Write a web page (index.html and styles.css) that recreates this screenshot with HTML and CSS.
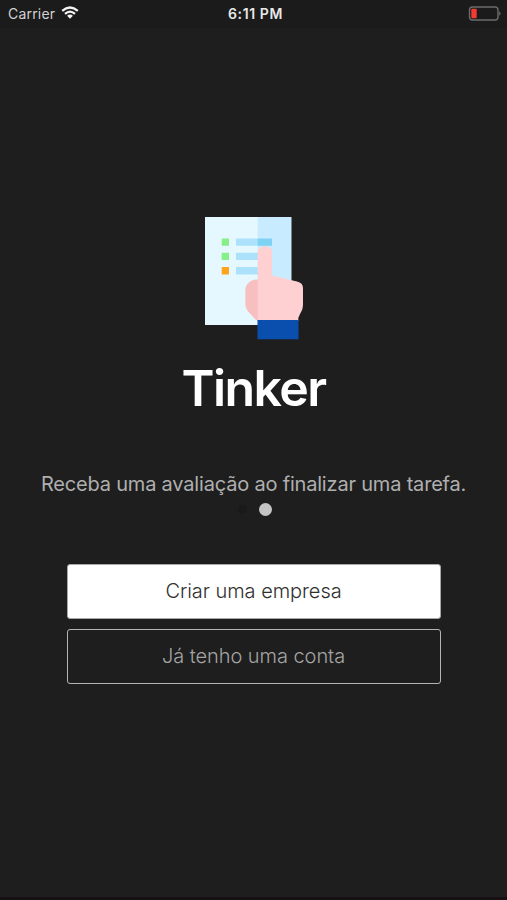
FILE: index.html
```html
<!DOCTYPE html>
<html lang="pt-BR">
<head>
<meta charset="utf-8">
<meta name="viewport" content="width=device-width, initial-scale=1">
<title>Tinker</title>
<link rel="stylesheet" href="styles.css">
</head>
<body>
<main class="screen">
  <header class="status">
    <div class="carrier"><span>Carrier</span>
      <svg class="wifi" width="18" height="14" viewBox="0 0 18 14" aria-hidden="true">
        <path d="M1.2 4.9Q9-1.9 16.8 4.9M4 7.9Q9 3.4 14 7.9" fill="none" stroke="#f4f4f4" stroke-width="2.3"/>
        <path d="M6.1 9.7Q9 7.4 11.9 9.7L9 12.8Z" fill="#f4f4f4"/>
      </svg>
    </div>
    <span class="time">6:11 PM</span>
    <svg class="battery" width="33" height="15" viewBox="0 0 33 15" aria-hidden="true">
      <rect x="1.5" y="1" width="28.5" height="13" rx="3" fill="none" stroke="#6c6c6c" stroke-width="1.4"/>
      <rect x="3.3" y="2.8" width="5.4" height="9.4" rx="1" fill="#f53a32"/>
      <path d="M31.2 5.2Q34 7.5 31.2 9.8Z" fill="#6c6c6c"/>
    </svg>
  </header>
  <section class="intro">
    <svg class="logo" width="100" height="124" viewBox="204 216 100 124" aria-hidden="true">
      <path d="M205 217h53v108h-53z" fill="#e6f8ff"/>
      <path d="M257.7 217h33.8v108h-33.8z" fill="#c9ebff"/>
      <path d="M221.7 238.5h7.3v7.3h-7.3zM221.7 252.8h7.3v7.3h-7.3z" fill="#86ef88"/>
      <path d="M221.7 267h7.3v7.5h-7.3z" fill="#ffa51d"/>
      <path d="M236 238.5h22v7.3h-22zM236 252.8h22v7.3h-22zM236 267h22v7.5h-22z" fill="#abe1fa"/>
      <path d="M257.7 238.5H272v7.3h-14.3z" fill="#7ed3f5"/>
      <path d="M258 279.5C250 279 245.3 284.5 245.3 291V303C245.3 308 247 310 249.5 313L255.5 319.5L258 321Z" fill="#f8bfc0"/>
      <path d="M257.7 321V252C257.7 248.5 260.5 246.3 264.8 246.3C269.2 246.3 272 248.5 272 252V275.5L297 281.5C301 282.5 303 284.5 303 288V304C303 309 301.5 311.5 300 314L298.3 318V321Z" fill="#ffd0d1"/>
      <path d="M257.5 320h41v19.3h-41z" fill="#0b4fae"/>
    </svg>
    <h1 class="title">Tinker</h1>
    <p class="tagline">Receba uma avaliação ao finalizar uma tarefa.</p>
    <div class="dots"><i class="dot"></i><i class="dot active"></i></div>
  </section>
  <nav class="actions">
    <button class="btn primary"><span>Criar uma empresa</span></button>
    <button class="btn outline"><span>Já tenho uma conta</span></button>
  </nav>
</main>
</body>
</html>
```
FILE: styles.css
```css
* { box-sizing: border-box; }
body { margin: 0; background: #1e1e1e; font-family: Inter, "Liberation Sans", sans-serif; }
.screen { height: 900px; display: flex; flex-direction: column; align-items: center; border-bottom: 3px solid #171014; overflow: hidden; }
.status { width: 100%; height: 28px; padding: 0 6px 2px 8px; display: grid; grid-template-columns: 1fr auto 1fr; align-items: center; background: #1b1b1b; }
.carrier { display: flex; align-items: center; gap: 6px; font-size: 14px; letter-spacing: 0.2px; color: #d2d2d2; }
.time { padding-left: 2px; font-size: 14px; font-weight: 600; letter-spacing: 0.6px; color: #e8e8e8; }
.battery { justify-self: end; }
.intro { margin-top: 188px; display: flex; flex-direction: column; align-items: center; }
.logo { display: block; }
.title { margin: 18px 0 0; height: 60px; font-size: 50px; line-height: 60px; font-weight: 600; letter-spacing: -1.6px; color: #fff; }
.tagline { margin: 54px 0 0; height: 24px; font-size: 20px; line-height: 24px; white-space: nowrap; color: #afafaf; letter-spacing: -0.19px; }
.dots { height: 13px; margin-top: 7px; padding-left: 2px; display: flex; align-items: center; gap: 12px; }
.dot { width: 9px; height: 9px; border-radius: 50%; background: #1a1a1a; }
.dot.active { width: 13px; height: 13px; background: #c4c4c4; }
.actions { width: 374px; margin-top: 48px; display: flex; flex-direction: column; gap: 10px; }
.btn { height: 55px; padding: 0 0 1px; border: 1px solid #a8a8a8; border-radius: 3px; font: 300 20px/24px Inter, "Liberation Sans", sans-serif; letter-spacing: -0.05px; }
.primary { background: #fff; color: #303030; }
.outline { background: transparent; color: #a4a4a4; border-color: #b4b4b4; }
```
